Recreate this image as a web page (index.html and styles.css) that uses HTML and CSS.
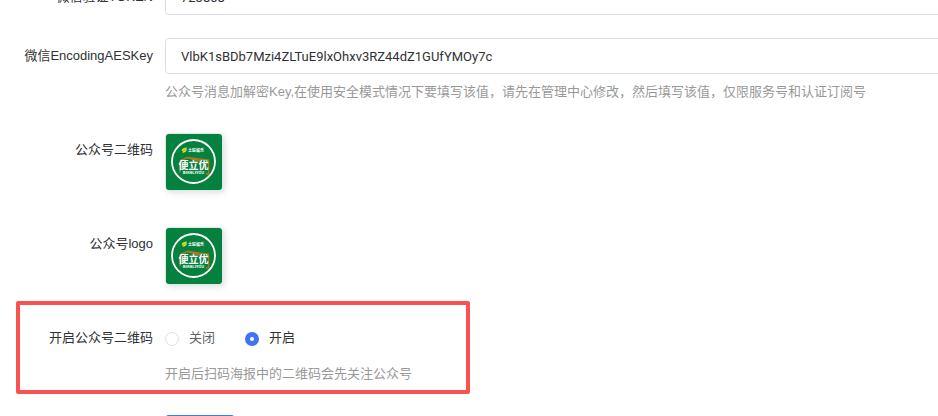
FILE: index.html
```html
<!DOCTYPE html>
<html lang="zh-CN">
<head>
    <meta charset="UTF-8">
    <meta name="viewport" content="width=device-width, initial-scale=1.0">
    <title>公众号设置</title>
    <link rel="stylesheet" href="styles.css">
</head>
<body>
    <svg class="sprite" aria-hidden="true">
        <symbol id="logo" viewBox="0 0 56 56">
            <rect width="56" height="56" fill="#05813f"/>
            <circle cx="27.500" cy="27.500" r="21.500" fill="none" stroke="#fff" stroke-width="1.800"/>
            <path d="M15.500 16.500c.5-2 2.500-3 5.500-3-.2 2-1.800 3.500-4 3.700z" fill="#c9dc1c"/>
            <path d="M16.500 18.200c1.500 0 3.200-1 4-2.700" fill="none" stroke="#f4e51c" stroke-width="1.200"/>
            <text class="logo-brand" x="22" y="18">土匠娱乐</text>
            <path d="M14 27V38.500M14 27L21 23.500 42.500 26V40H40M21 23.500L34 27" fill="none" stroke="#b8741c" stroke-width="1.400"/>
            <text class="logo-name" x="27.500" y="35" text-anchor="middle">便立优</text>
            <text class="logo-latin" x="27.500" y="40" text-anchor="middle">BIANLIYOU</text>
        </symbol>
    </svg>

    <div class="page">
        <form class="settings">
            <div class="row">
                <label class="label" for="token">微信验证TOKEN</label>
                <div class="content">
                    <input class="text-input" type="text" id="token" value="723808">
                </div>
            </div>
            <div class="row">
                <label class="label" for="aes-key">微信EncodingAESKey</label>
                <div class="content">
                    <input class="text-input" type="text" id="aes-key" value="VlbK1sBDb7Mzi4ZLTuE9lxOhxv3RZ44dZ1GUfYMOy7c">
                    <p class="hint">公众号消息加解密Key,在使用安全模式情况下要填写该值，请先在管理中心修改，然后填写该值，仅限服务号和认证订阅号</p>
                </div>
            </div>
            <div class="row">
                <label class="label" for="qrcode">公众号二维码</label>
                <div class="content">
                    <button class="thumb" type="button" id="qrcode"><svg><use href="#logo"/></svg></button>
                </div>
            </div>
            <div class="row">
                <label class="label" for="logo-image">公众号logo</label>
                <div class="content">
                    <button class="thumb" type="button" id="logo-image"><svg><use href="#logo"/></svg></button>
                </div>
            </div>
            <div class="row highlight" role="radiogroup" aria-labelledby="switch-label">
                <span class="label" id="switch-label">开启公众号二维码</span>
                <div class="content">
                    <div class="radios">
                        <label class="radio"><input type="radio" name="switch" value="0"><span>关闭</span></label>
                        <label class="radio"><input type="radio" name="switch" value="1" checked><span>开启</span></label>
                    </div>
                    <p class="hint">开启后扫码海报中的二维码会先关注公众号</p>
                </div>
            </div>
            <div class="row">
                <div class="content actions">
                    <button class="submit" type="submit" aria-label="提交"></button>
                </div>
            </div>
        </form>
    </div>
</body>
</html>
```

FILE: styles.css
```css
*,
*::after {
    box-sizing: border-box;
}

body {
    margin: 0;
    background-color: #fff;
    color: #303133;
    font-family: "Liberation Sans", "Noto Sans CJK SC", sans-serif;
    font-size: 13px;
}

.sprite {
    position: absolute;
    width: 0;
    height: 0;
}

.page {
    height: 100vh;
    overflow: hidden;
}

.settings {
    display: flex;
    flex-direction: column;
    gap: 23px;
    margin: -21px -20px 0 0;
}

.row {
    display: flex;
}

.label {
    flex: 0 0 165px;
    padding-right: 12px;
    line-height: 36px;
    text-align: right;
}

.content {
    flex: 1;
    min-width: 0;
}

.text-input {
    display: block;
    width: 100%;
    height: 36px;
    padding: 0 15px;
    border: 1px solid #dcdde6;
    border-radius: 4px;
    background-color: #fff;
    color: #303133;
    font-family: Roboto, "Noto Sans CJK SC", sans-serif;
    font-size: 13px;
    outline: none;
}

.hint {
    margin: 0;
    color: #999;
    line-height: 35px;
    white-space: nowrap;
}

/* Image pickers */
.thumb {
    display: block;
    width: 58px;
    height: 58px;
    margin: 1px 0 12px;
    padding: 0;
    border: 1px solid #dcebe8;
    border-radius: 4px;
    background: none;
    box-shadow: 2px 2px 6px rgba(0, 0, 0, 0.12);
    overflow: hidden;
    cursor: pointer;
}

.thumb svg {
    display: block;
    width: 100%;
    height: 100%;
}

.logo-brand,
.logo-name,
.logo-latin {
    fill: #fff;
    font-family: "Noto Sans CJK SC", sans-serif;
    font-weight: bold;
}

.logo-brand {
    font-size: 4px;
}

.logo-name {
    font-size: 10px;
}

.logo-latin {
    font-size: 4px;
}

/* Radio buttons */
.radios {
    display: flex;
    gap: 30px;
    height: 36px;
}

.radio {
    display: flex;
    align-items: center;
    gap: 10px;
    color: #606266;
    line-height: 36px;
    cursor: pointer;
}

.radio input {
    appearance: none;
    width: 14px;
    height: 14px;
    margin: 2px 0 0;
    border: 1px solid #dcdfe6;
    border-radius: 50%;
    background-color: #fff;
}

.radio input:checked {
    border: 5px solid #4073fa;
}

.radio input:checked + span {
    color: #303133;
}

/* Frame around the option */
.highlight {
    position: relative;
}

.highlight::after {
    content: "";
    position: absolute;
    top: -19px;
    left: 16px;
    width: 454px;
    height: 93px;
    border: 4px solid #fa5151;
    border-radius: 2px;
    pointer-events: none;
}

.actions {
    padding: 1px 0 0 165px;
}

.submit {
    width: 70px;
    height: 36px;
    border: none;
    border-radius: 4px;
    background-color: #4073fa;
    cursor: pointer;
}
```
